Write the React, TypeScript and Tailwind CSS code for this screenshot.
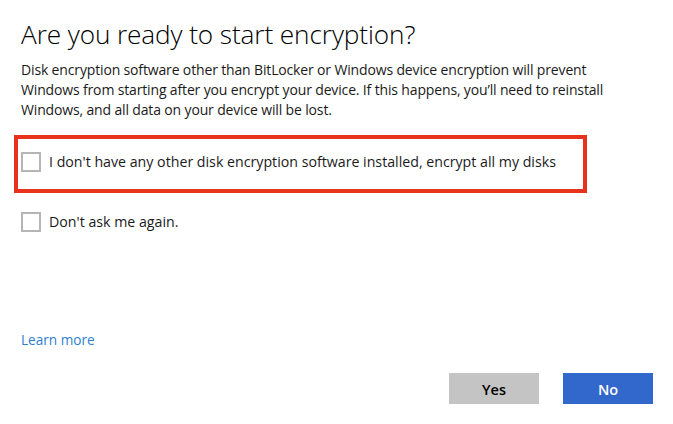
import React from "react";

function Checkbox() {
  return <span className="block h-5 w-5 shrink-0 border-2 border-[#b5b5b5] bg-white" />;
}

export default function App() {
  return (
    <div
      className="flex h-[424px] w-[673px] flex-col bg-white px-[21px] text-[#1a1a1a]"
      style={{ fontFamily: '"Open Sans", "Noto Sans", sans-serif' }}
    >
      <h1 className="mt-[17px] text-[26.2px] leading-[34px] font-light tracking-[-0.1px] text-black">
        Are you ready to start encryption?
      </h1>
      <p className="mt-[9px] text-[14px] leading-[20px] tracking-[-0.15px] whitespace-nowrap">
        Disk encryption software other than BitLocker or Windows device encryption will prevent
        <br />
        Windows from starting after you encrypt your device. If this happens, you’ll need to reinstall
        <br />
        Windows, and all data on your device will be lost.
      </p>

      <div className="mt-[15px] -ml-[7px] flex h-[58px] w-[573px] items-start border-[4px] border-[#e8321e] pt-[12px] pl-[3px]">
        <label className="flex items-center gap-[8px] text-[14.2px]">
          <Checkbox />
          I don't have any other disk encryption software installed, encrypt all my disks
        </label>
      </div>

      <label className="mt-[18px] flex items-center gap-[8px] text-[14.2px]">
        <Checkbox />
        Don't ask me again.
      </label>

      <a className="mt-[98px] text-[13.6px] text-[#2f7fd0]" href="#">
        Learn more
      </a>

      <div className="mt-[22px] flex justify-end gap-[24px]">
        <button className="h-[31px] w-[90px] bg-[#c4c4c4] pt-[4px] text-[14.5px] font-semibold text-black">
          Yes
        </button>
        <button className="mr-[-1px] h-[31px] w-[90px] bg-[#3267cb] pt-[4px] text-[14.5px] font-semibold text-white">
          No
        </button>
      </div>
    </div>
  );
}
